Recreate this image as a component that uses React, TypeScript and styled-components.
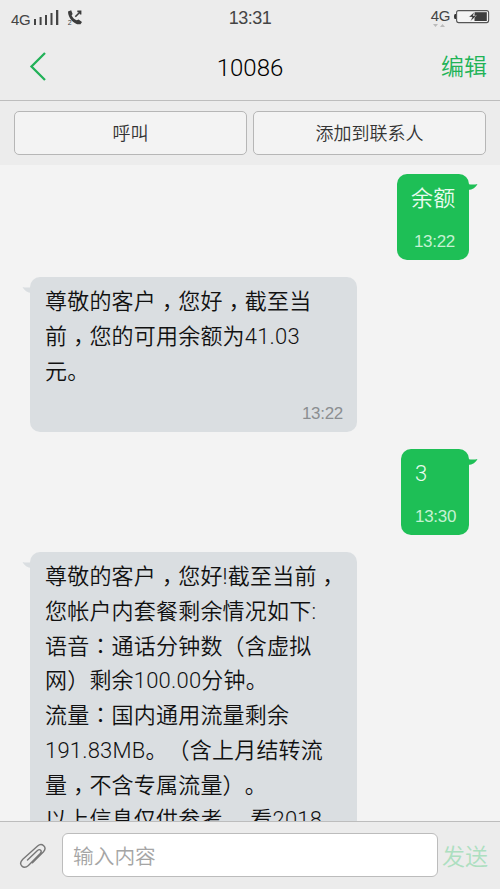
import React from "react";
import styled, { createGlobalStyle } from "styled-components";

const GlobalStyle = createGlobalStyle`
  * { box-sizing: border-box; }
  body {
    margin: 0;
    background: #f3f3f3;
    font-family: Roboto, "Noto Sans CJK SC", sans-serif;
    font-weight: 350;
    text-spacing-trim: space-all;
  }
`;

const Screen = styled.div`
  width: 500px;
  height: 889px;
  display: flex;
  flex-direction: column;
  overflow: hidden;
  background: #f3f3f3;
`;

const StatusBar = styled.div`
  height: 36px;
  flex: none;
  display: grid;
  grid-template-columns: 1fr 60px 1fr;
  background: #ececec;
  color: #444;
`;

const StatusGroup = styled.div<{ $end?: boolean }>`
  display: flex;
  align-items: flex-start;
  justify-content: ${(p) => (p.$end ? "flex-end" : "flex-start")};
  padding: ${(p) => (p.$end ? "8px 10px 0 0" : "8px 0 0 11px")};
`;

const NetworkLabel = styled.span<{ $low?: boolean }>`
  font-family: "Liberation Sans", sans-serif;
  font-size: 15px;
  line-height: 15px;
  letter-spacing: -0.4px;
  margin-top: ${(p) => (p.$low ? "4px" : "0")};
`;

const Clock = styled.div`
  font-family: "Liberation Sans", sans-serif;
  font-size: 18px;
  line-height: 36px;
  text-align: center;
  letter-spacing: -0.5px;
`;

const Header = styled.header`
  height: 65px;
  flex: none;
  display: grid;
  grid-template-columns: 100px 1fr 100px;
  align-items: center;
  background: #ececec;
  border-bottom: 1px solid #bdbdbd;
`;

const BackButton = styled.button`
  border: 0;
  padding: 0 0 0 29px;
  background: none;
  height: 32px;
  margin-top: -5px;
  text-align: left;
`;

const Title = styled.h1`
  margin: 0;
  font-size: 24px;
  font-weight: 300;
  line-height: 30px;
  text-align: center;
  color: #000;
`;

const EditButton = styled.button`
  border: 0;
  background: none;
  padding: 0 13px 0 0;
  margin-top: -6px;
  text-align: right;
  font: 350 23px/32px "Noto Sans CJK SC", sans-serif;
  color: #20b356;
  white-space: nowrap;
`;

const Actions = styled.div`
  height: 64px;
  flex: none;
  display: grid;
  grid-template-columns: 233px 233px;
  gap: 6px;
  padding: 10px 14px;
  background: #ececec;
`;

const ActionButton = styled.button`
  height: 44px;
  border: 1px solid #b6b6b6;
  border-radius: 5px;
  background: #f3f3f3;
  color: #333;
  font: 350 18px/40px "Noto Sans CJK SC", sans-serif;
  padding: 0 0 2px;
`;

const Conversation = styled.main`
  flex: 1;
  min-height: 0;
  overflow: hidden;
  display: flex;
  flex-direction: column;
  gap: 17px;
  padding: 9px 31px 0 30px;
`;

const Bubble = styled.article<{ $sent?: boolean; $width: number; $height: number }>`
  position: relative;
  flex: none;
  display: flex;
  flex-direction: column;
  justify-content: space-between;
  align-self: ${(p) => (p.$sent ? "flex-end" : "flex-start")};
  width: ${(p) => p.$width}px;
  height: ${(p) => p.$height}px;
  padding: ${(p) => (p.$sent ? "8px 14px 8px" : "8px 14px 8px 15px")};
  border-radius: 10px;
  background: ${(p) => (p.$sent ? "#1ebf56" : "#dadee1")};
  color: ${(p) => (p.$sent ? "#e9fbef" : "#111")};
`;

const Tail = styled.svg<{ $sent?: boolean }>`
  position: absolute;
  top: 8px;
  ${(p) => (p.$sent ? "right: -9px;" : "left: -8px; transform: scaleX(-1);")}
`;

const Line = styled.div`
  height: 34.75px;
  font-size: 22px;
  line-height: 34.75px;
  letter-spacing: 0.2px;
  white-space: nowrap;
`;

const Digits = styled.span`
  font-weight: 300;
`;

const Comma = styled.span`
  display: inline-block;
  line-height: 1;
  font-family: "Noto Sans CJK TC", sans-serif;
  transform: translateY(6px);
`;

const Colon = styled.span`
  display: inline-block;
  line-height: 1;
  font-family: "Noto Sans CJK TC", sans-serif;
`;

const Time = styled.time<{ $sent?: boolean }>`
  text-align: right;
  font-family: "Liberation Sans", sans-serif;
  font-size: 17px;
  line-height: 20px;
  letter-spacing: -0.3px;
  white-space: nowrap;
  color: ${(p) => (p.$sent ? "#c4f2d2" : "#8b8e91")};
`;

const Composer = styled.footer`
  height: 68px;
  flex: none;
  display: grid;
  grid-template-columns: 62px 376px 1fr;
  align-items: start;
  padding-top: 11px;
  background: #ececec;
  border-top: 1px solid #bdbdbd;
`;

const AttachButton = styled.button`
  border: 0;
  background: none;
  padding: 9px 0 0 18px;
  text-align: left;
`;

const Input = styled.input`
  width: 376px;
  height: 44px;
  border: 1px solid #bcbcbc;
  border-radius: 6px;
  background: #fff;
  padding: 0 10px 0;
  font: 350 20.7px "Noto Sans CJK SC", sans-serif;
  &::placeholder { color: #a5a5a5; opacity: 1; }
`;

const SendButton = styled.button`
  border: 0;
  background: none;
  padding: 0 0 0 4px;
  text-align: left;
  font: 350 23px/44px "Noto Sans CJK SC", sans-serif;
  color: #addfc0;
  white-space: nowrap;
`;

const SignalIcon = styled.svg`
  flex: none;
  margin: 0 6px 0 3px;
`;

const Signal = () => (
  <SignalIcon width="28" height="18" viewBox="0 0 28 18" fill="#444">
    <rect x="1" y="11" width="2" height="6" />
    <rect x="6.6" y="9" width="2" height="8" />
    <rect x="12" y="7" width="2" height="10" />
    <rect x="17.5" y="5" width="2" height="12" />
    <rect x="23" y="2" width="2.3" height="15" />
  </SignalIcon>
);

const CallStatus = () => (
  <svg width="20" height="18" viewBox="2 0 20 18">
    <path d="M3 3.4 6.2 2.3 7.6 6 6.6 7.5C7.7 9.8 9.5 11.5 11.7 12.3L13.6 11.4 17 14 15.5 16.2C10 17.4 3 10.5 3 3.4Z" fill="#3c3c3c" />
    <path d="M10.3 8.7 14.8 4.3M12.3 3.4H15.6V6.6" fill="none" stroke="#3c3c3c" strokeWidth="1.6" />
    <text x="2.8" y="17" fontFamily="Liberation Sans" fontSize="7" fill="#3c3c3c">2</text>
  </svg>
);

const DataArrows = () => (
  <svg width="12" height="5" viewBox="0 0 12 5" fill="#bbb">
    <path d="M0 1H5L2.5 4ZM7 4H12L9.5 1Z" />
  </svg>
);

const NetworkStack = styled.div`
  display: flex;
  flex-direction: column;
  align-items: center;
  margin-right: 3px;
  svg { display: block; margin-left: -2px; }
`;

const Battery = () => (
  <svg width="37" height="17" viewBox="0 0 37 17">
    <path d="M3 6H2Q1 6 1 8.5T2 11H3Z" fill="#333" />
    <rect x="3.6" y="2.6" width="32" height="12" rx="2" fill="#f4f4f4" stroke="#555" strokeWidth="1.1" />
    <rect x="21.5" y="4.2" width="12.3" height="8.8" fill="#3d3d3d" />
    <path d="M21.5 4 15.8 9.1H19.2L17.5 13.2 23.4 7.7H20Z" fill="#333" stroke="#f4f4f4" strokeWidth=".4" />
  </svg>
);

const BackIcon = () => (
  <svg width="18" height="32" viewBox="0 0 18 32">
    <path d="M16 3 2.5 16.5 16 30" fill="none" stroke="#22b158" strokeWidth="2.3" />
  </svg>
);

const PaperClip = () => (
  <svg width="30" height="28" viewBox="0 0 30 28" fill="none" stroke="#777" strokeWidth="1.4" strokeLinecap="round">
    <path d="M14.5 20.8 25.5 9.8C29.5 5.2 24 .3 19.6 4L4.8 17.2C-.4 22.4 5.5 28 10.4 23.4L22 11.8C24.7 8.7 22 6.3 19.2 8.7L9.5 18" />
  </svg>
);

const renderLine = (text: string) =>
  text.split(/([，：]|[0-9A-Z.]+)/).map((part, i) => {
    if (part === "，") return <Comma key={i}>{part}</Comma>;
    if (part === "：") return <Colon key={i}>{part}</Colon>;
    if (/^[0-9A-Z.]+$/.test(part)) return <Digits key={i}>{part}</Digits>;
    return part;
  });

type Message = { lines: string[]; time?: string; sent?: boolean; width: number; height: number };

const messages: Message[] = [
  { lines: ["余额"], time: "13:22", sent: true, width: 72, height: 86 },
  { lines: ["尊敬的客户，您好，截至当", "前，您的可用余额为41.03", "元。"], time: "13:22", width: 327, height: 155 },
  { lines: ["3"], time: "13:30", sent: true, width: 68, height: 86 },
  {
    lines: [
      "尊敬的客户，您好!截至当前，",
      "您帐户内套餐剩余情况如下:",
      "语音：通话分钟数（含虚拟",
      "网）剩余100.00分钟。",
      "流量：国内通用流量剩余",
      "191.83MB。（含上月结转流",
      "量，不含专属流量）。",
      "以上信息仅供参考。 看2018",
    ],
    width: 327,
    height: 320,
  },
];

export default function App() {
  return (
    <>
      <GlobalStyle />
      <Screen>
        <StatusBar>
          <StatusGroup>
            <NetworkLabel $low>4G</NetworkLabel>
            <Signal />
            <CallStatus />
          </StatusGroup>
          <Clock>13:31</Clock>
          <StatusGroup $end>
            <NetworkStack>
              <NetworkLabel>4G</NetworkLabel>
              <DataArrows />
            </NetworkStack>
            <Battery />
          </StatusGroup>
        </StatusBar>
        <Header>
          <BackButton><BackIcon /></BackButton>
          <Title>10086</Title>
          <EditButton>编辑</EditButton>
        </Header>
        <Actions>
          <ActionButton>呼叫</ActionButton>
          <ActionButton>添加到联系人</ActionButton>
        </Actions>
        <Conversation>
          {messages.map((m, i) => (
            <Bubble key={i} $sent={m.sent} $width={m.width} $height={m.height}>
              <Tail $sent={m.sent} width="10" height="10" viewBox="0 0 10 10">
                <path d="M0 2Q5 3.2 9.5 2Q7 7.5 0 8Z" fill={m.sent ? "#1ebf56" : "#dadee1"} />
              </Tail>
              <div>
                {m.lines.map((line) => <Line key={line}>{renderLine(line)}</Line>)}
              </div>
              {m.time && <Time $sent={m.sent}>{m.time}</Time>}
            </Bubble>
          ))}
        </Conversation>
        <Composer>
          <AttachButton><PaperClip /></AttachButton>
          <Input placeholder="输入内容" />
          <SendButton>发送</SendButton>
        </Composer>
      </Screen>
    </>
  );
}
